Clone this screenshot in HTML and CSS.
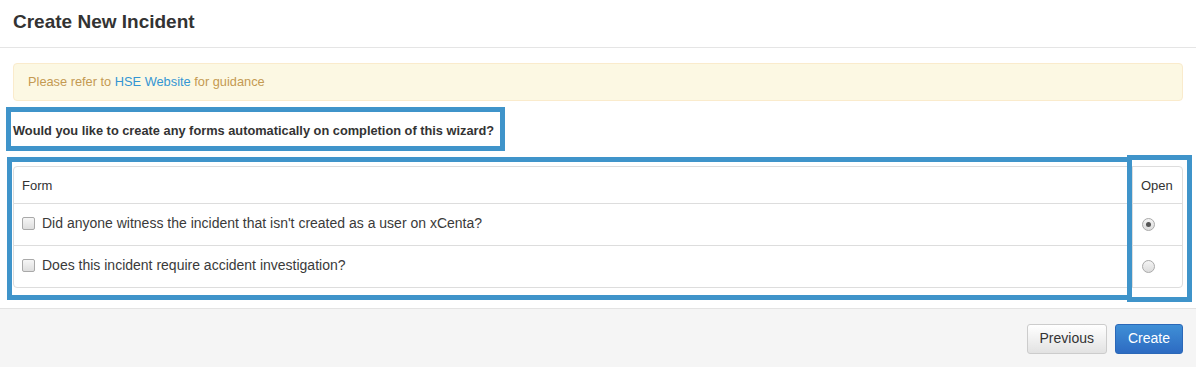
FILE: index.html
```html
<!DOCTYPE html>
<html lang="en">
<head>
  <meta charset="UTF-8">
  <title>Create New Incident</title>
  <link rel="stylesheet" href="styles.css">
</head>
<body>

  <div class="modal-header">
    <h4 class="modal-title">Create New Incident</h4>
  </div>

  <div class="modal-body">
    <div class="alert-warning">
      Please refer to <a href="#">HSE Website</a> for guidance
    </div>

    <p class="question">Would you like to create any forms automatically on completion of this wizard?</p>

    <div class="table-panel">
      <table class="forms-table">
        <thead>
          <tr>
            <th>Form</th>
            <th class="col-open">Open</th>
          </tr>
        </thead>
        <tbody>
          <tr>
            <td><span class="fake-check"></span>Did anyone witness the incident that isn't created as a user on xCenta?</td>
            <td class="col-open"><span class="fake-radio checked"></span></td>
          </tr>
          <tr>
            <td><span class="fake-check"></span>Does this incident require accident investigation?</td>
            <td class="col-open"><span class="fake-radio"></span></td>
          </tr>
        </tbody>
      </table>
    </div>
  </div>

  <div class="modal-footer">
    <button class="btn btn-default">Previous</button>
    <button class="btn btn-primary">Create</button>
  </div>

  <!-- highlight boxes drawn over the screenshot -->
  <div class="mark mark-question"></div>
  <div class="mark mark-forms"></div>
  <div class="mark mark-open"></div>

</body>
</html>
```

FILE: styles.css
```css
:root {
  --texto: #333333;
  --borda: #dddddd;
  --marca: #3f94ca;
}

body {
  margin: 0;
  font-family: "Liberation Sans", Arial, sans-serif;
  font-size: 13px;
  color: var(--texto);
  background: #ffffff;
  position: relative;
  width: 1196px;
  height: 367px;
  overflow: hidden;
}

/* Header */
.modal-header {
  padding: 9px 13px 12px;
  border-bottom: 1px solid #e5e5e5;
}

.modal-title {
  margin: 0;
  font-size: 19px;
  line-height: 26px;
  font-weight: bold;
  color: #333;
}

/* Body */
.modal-body {
  padding: 15px 13px 20px;
}

.alert-warning {
  background-color: #fcf8e3;
  border: 1px solid #faebcc;
  border-radius: 4px;
  color: #c49a52;
  font-size: 12.8px;
  line-height: 16px;
  padding: 10px 14px;
}

.alert-warning a {
  color: #3496d3;
  text-decoration: none;
}

.question {
  margin: 22px 0 27px;
  font-size: 12.8px;
  font-weight: bold;
  line-height: 16px;
  color: #333;
}

/* Table */
.table-panel {
  border: 1px solid var(--borda);
  border-radius: 4px;
  overflow: hidden;
}

.forms-table {
  width: 100%;
  border-collapse: collapse;
}

.forms-table th {
  text-align: left;
  font-weight: normal;
  font-size: 13px;
  height: 36px;
  padding: 0 8px;
  border-bottom: 1px solid var(--borda);
}

.forms-table td {
  height: 38px;
  padding: 0 8px 3px;
  font-size: 14px;
  color: #3a3a3a;
  border-bottom: 1px solid var(--borda);
}

.forms-table tbody tr:last-child td {
  border-bottom: none;
}

.col-open {
  width: 33px;
  border-left: 1px solid var(--borda);
}

.fake-check {
  display: inline-block;
  vertical-align: -2px;
  width: 11px;
  height: 11px;
  border: 1px solid #a9a9a9;
  border-radius: 2px;
  background: linear-gradient(#f6f6f6, #dedede);
  margin-right: 7px;
}

.fake-radio {
  display: inline-block;
  vertical-align: middle;
  width: 11px;
  height: 11px;
  border: 1px solid #aaaaaa;
  border-radius: 50%;
  background: linear-gradient(#f4f4f4, #dcdcdc);
  position: relative;
  margin-left: 1px;
}

.fake-radio.checked::after {
  content: "";
  position: absolute;
  left: 3px;
  top: 3px;
  width: 5px;
  height: 5px;
  border-radius: 50%;
  background: #555;
}

/* Footer */
.modal-footer {
  position: absolute;
  left: 0;
  right: 0;
  bottom: 0;
  top: 308px;
  border-top: 1px solid #e3e3e3;
  background: #f5f5f5;
  display: flex;
  justify-content: flex-end;
  align-items: flex-start;
  gap: 8px;
  padding: 15px 13px 0;
}

.btn {
  font-family: inherit;
  font-size: 14px;
  line-height: 19px;
  padding: 4px 12px 5px;
  border-radius: 3px;
  cursor: pointer;
}

.btn-default {
  color: #333;
  background: linear-gradient(#ffffff, #e2e2e2);
  border: 1px solid #cccccc;
}

.btn-primary {
  color: #ffffff;
  background: linear-gradient(#3f8fd6, #2d6bc2);
  border: 1px solid #2b68b8;
}

/* Highlight boxes */
.mark {
  position: absolute;
  border: 5px solid var(--marca);
  box-sizing: border-box;
  pointer-events: none;
}

.mark-question {
  left: 6px;
  top: 107px;
  width: 499px;
  height: 44px;
}

.mark-forms {
  left: 7px;
  top: 157px;
  width: 1125px;
  height: 143px;
}

.mark-open {
  left: 1127px;
  top: 155px;
  width: 65px;
  height: 147px;
}
```
